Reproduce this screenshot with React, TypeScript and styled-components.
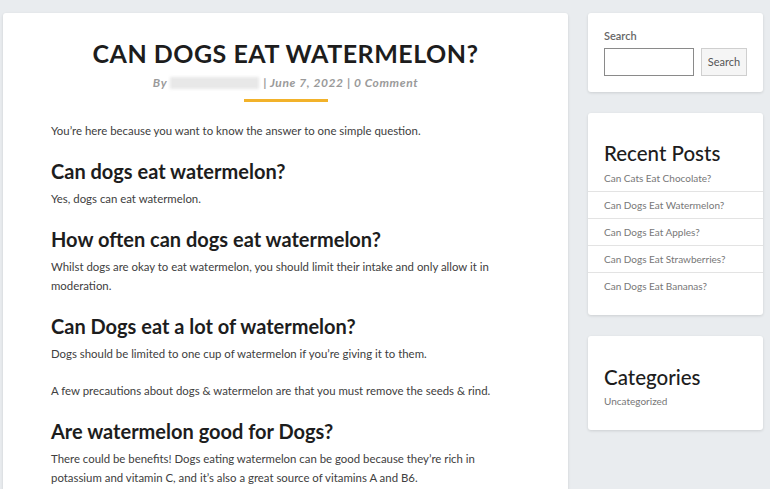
import React from "react";
import styled, { createGlobalStyle } from "styled-components";

const Global = createGlobalStyle`
  html, body { margin: 0; padding: 0; background: #e9ecef; }
  body { font-family: "Source Sans Pro", Lato, "Liberation Sans", sans-serif; overflow: hidden; }
  * { box-sizing: border-box; }
`;

const Page = styled.div`
  display: grid;
  grid-template-columns: 565px 175px;
  column-gap: 20px;
  align-items: start;
  padding: 13px 0 0 3px;
  height: 489px;
  overflow: hidden;
`;

const Card = styled.div`
  background: #fff;
  border-radius: 3px;
  box-shadow: 0 1px 3px rgba(0, 0, 0, 0.12);
`;

const MainCard = styled(Card)`
  padding: 24px 48px 40px 48px;
  min-height: 520px;
`;

const Title = styled.h1`
  margin: 0;
  text-align: center;
  font-family: Lato, sans-serif;
  font-weight: 700;
  font-size: 25px;
  letter-spacing: 0.5px;
  line-height: 32px;
  color: #1d1d1d;
`;

const Meta = styled.div`
  margin-top: 6px;
  text-align: center;
  font-family: Lato, sans-serif;
  font-style: italic;
  font-weight: 700;
  font-size: 12px;
  letter-spacing: 0.6px;
  color: #9a9a9a;
  line-height: 16px;
`;

const Blur = styled.span`
  display: inline-block;
  width: 89px;
  height: 12px;
  vertical-align: -2px;
  margin: 0 4px 0 3px;
  background: #e8e8e8;
  filter: blur(1.5px);
`;

const Underline = styled.div`
  width: 84px;
  height: 3px;
  margin: 8px auto 0;
  background: #f2b22a;
`;

const Body = styled.div`
  margin-top: 19px;
  color: #404040;
  font-size: 11.4px;
  line-height: 19px;
`;

const P = styled.p`
  margin: 0 0 18px;
`;

const H2 = styled.h2`
  margin: 0 0 5px;
  font-family: Lato, sans-serif;
  font-weight: 700;
  font-size: 20px;
  line-height: 26px;
  color: #1d1d1d;
`;

const Side = styled.div`
  display: flex;
  flex-direction: column;
  gap: 21px;
`;

const SearchCard = styled(Card)`
  padding: 16px 16px 16px 16px;
`;

const Label = styled.div`
  font-size: 11px;
  font-weight: 600;
  color: #666;
  line-height: 14px;
`;

const SearchRow = styled.div`
  display: flex;
  gap: 7px;
  margin-top: 5px;
`;

const Input = styled.div`
  width: 90px;
  height: 28px;
  border: 1px solid #8a8a8a;
`;

const Button = styled.div`
  width: 46px;
  height: 28px;
  padding-bottom: 1px;
  border: 1px solid #cfcfcf;
  background: #f5f5f5;
  font-size: 11px;
  color: #555;
  display: flex;
  align-items: center;
  justify-content: center;
`;

const WidgetCard = styled(Card)<{ $pt: number; $pb: number }>`
  padding: ${(p) => p.$pt}px 0 ${(p) => p.$pb}px;
`;

const WidgetTitle = styled.h3`
  margin: 0;
  padding: 0 16px;
  font-family: Lato, sans-serif;
  font-weight: 500;
  font-size: 20.5px;
  line-height: 24px;
  color: #1d1d1d;
`;

const LinkList = styled.ul`
  list-style: none;
  margin: 0;
  padding: 0;
`;

const LinkItem = styled.li<{ $last?: boolean }>`
  padding: 0 16px;
  height: 27px;
  line-height: 26px;
  font-size: 10px;
  color: #777;
  border-bottom: ${(p) => (p.$last ? "none" : "1px solid #e3e3e3")};
`;

const CatLink = styled.div`
  padding: 0 16px;
  margin-top: 5px;
  font-size: 10px;
  line-height: 14px;
  color: #777;
`;

const posts = [
  "Can Cats Eat Chocolate?",
  "Can Dogs Eat Watermelon?",
  "Can Dogs Eat Apples?",
  "Can Dogs Eat Strawberries?",
  "Can Dogs Eat Bananas?",
];

export default function App() {
  return (
    <>
      <Global />
      <Page>
        <MainCard>
          <Title>CAN DOGS EAT WATERMELON?</Title>
          <Meta>
            By<Blur />| June 7, 2022 | 0 Comment
          </Meta>
          <Underline />
          <Body>
            <P>You’re here because you want to know the answer to one simple question.</P>
            <H2>Can dogs eat watermelon?</H2>
            <P>Yes, dogs can eat watermelon.</P>
            <H2>How often can dogs eat watermelon?</H2>
            <P>
              Whilst dogs are okay to eat watermelon, you should limit their intake and only allow it in
              moderation.
            </P>
            <H2>Can Dogs eat a lot of watermelon?</H2>
            <P>Dogs should be limited to one cup of watermelon if you’re giving it to them.</P>
            <P>A few precautions about dogs &amp; watermelon are that you must remove the seeds &amp; rind.</P>
            <H2>Are watermelon good for Dogs?</H2>
            <P>
              There could be benefits! Dogs eating watermelon can be good because they’re rich in
              potassium and vitamin C, and it’s also a great source of vitamins A and B6.
            </P>
          </Body>
        </MainCard>
        <Side>
          <SearchCard>
            <Label>Search</Label>
            <SearchRow>
              <Input />
              <Button>Search</Button>
            </SearchRow>
          </SearchCard>
          <WidgetCard $pt={28} $pb={15}>
            <WidgetTitle>Recent Posts</WidgetTitle>
            <LinkList>
              {posts.map((t, i) => (
                <LinkItem key={t} $last={i === posts.length - 1}>
                  {t}
                </LinkItem>
              ))}
            </LinkList>
          </WidgetCard>
          <WidgetCard $pt={29} $pb={22}>
            <WidgetTitle>Categories</WidgetTitle>
            <CatLink>Uncategorized</CatLink>
          </WidgetCard>
        </Side>
      </Page>
    </>
  );
}
